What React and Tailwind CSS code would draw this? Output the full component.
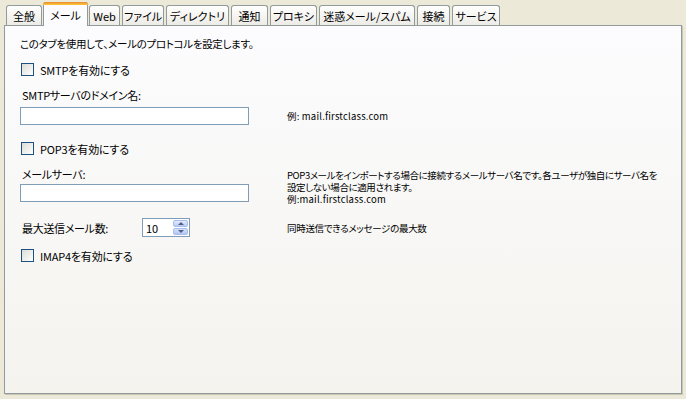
const tabs = [
  { label: "全般", w: "w-[36px]" },
  { label: "メール", w: "w-[45px]", active: true },
  { label: "Web", w: "w-[31px]" },
  { label: "ファイル", w: "w-[42px]" },
  { label: "ディレクトリ", w: "w-[63px]" },
  { label: "通知", w: "w-[37px]" },
  { label: "プロキシ", w: "w-[47px]" },
  { label: "迷惑メール/スパム", w: "w-[96px]" },
  { label: "接続", w: "w-[33px]" },
  { label: "サービス", w: "w-[48px]" },
];

const font =
  "font-['Noto_Sans_CJK_JP','Noto_Sans',sans-serif] [font-feature-settings:'palt'] text-[11px] leading-[12px] text-black";

function Checkbox({ label }) {
  return (
    <div className="flex items-center h-[13px] pl-[1px]">
      <span className="w-[13px] h-[13px] border border-[#1C5180] bg-gradient-to-br from-[#DCDCD7] to-white" />
      <span className="ml-[6px] tracking-[-0.2px]">{label}</span>
    </div>
  );
}

function TextInput() {
  return <div className="w-[229px] h-[18px] border border-[#7F9DB9] bg-white" />;
}

function Spinner() {
  return (
    <div className="w-[48px] h-[19px] border border-[#7F9DB9] bg-white flex items-center justify-between pl-[3px] pr-[1px]">
      <span>10</span>
      <div className="flex flex-col gap-[1px] w-[15px] h-[15px]">
        <div className="h-[7px] rounded-[2px] bg-gradient-to-b from-[#E3EBFD] to-[#B9CAF3] border border-[#A8BDEB] flex items-center justify-center overflow-hidden">
          <span className="w-0 h-0 border-x-[3px] border-x-transparent border-b-[3px] border-b-[#4D6185]" />
        </div>
        <div className="h-[7px] rounded-[2px] bg-gradient-to-b from-[#D5E0FA] to-[#B4C6F1] border border-[#A8BDEB] flex items-center justify-center overflow-hidden">
          <span className="w-0 h-0 border-x-[3px] border-x-transparent border-t-[3px] border-t-[#4D6185]" />
        </div>
      </div>
    </div>
  );
}

export default function App() {
  return (
    <div className={`w-[686px] h-[399px] bg-[#ECE9D8] px-[4px] ${font}`}>
      {/* tab strip */}
      <div className="flex items-end h-[25px] pl-[2px] gap-[2px]">
        {tabs.map((t) =>
          t.active ? (
            <div
              key={t.label}
              className={`${t.w} relative z-10 h-[24px] -mb-[1px] -mx-[1px] border border-b-0 border-[#919B9C] rounded-t-[3px] bg-[#FCFCFE] flex flex-col`}
            >
              <div className="h-[3px] -mx-[1px] -mt-[1px] rounded-t-[3px] bg-gradient-to-b from-[#E68B2C] to-[#FFC73C]" />
              <div className="flex-1 flex items-center justify-center pb-[1px] whitespace-nowrap">
                {t.label}
              </div>
            </div>
          ) : (
            <div
              key={t.label}
              className={`${t.w} h-[20px] border border-b-0 border-[#919B9C] rounded-t-[3px] bg-gradient-to-b from-white to-[#ECEBE6] flex items-center justify-center whitespace-nowrap`}
            >
              {t.label}
            </div>
          )
        )}
      </div>

      {/* panel */}
      <div className="w-[678px] h-[369px] border border-[#919B9C] shadow-[1px_1px_0_#C9C6B5] bg-gradient-to-b from-[#FCFCFE] to-[#F4F3EE] pl-[15px] pt-[12px]">
        <p className="h-[12px] tracking-[-0.3px] text-[10.5px]">
          このタブを使用して、メールのプロトコルを設定します。
        </p>

        <div className="mt-[13px]">
          <Checkbox label="SMTPを有効にする" />
        </div>

        <p className="mt-[13px] pl-[2px] h-[12px] tracking-[-0.3px]">SMTPサーバのドメイン名:</p>

        <div className="mt-[6px] grid grid-cols-[267px_1fr] items-center">
          <TextInput />
          <span className="text-[9.5px] tracking-[0.2px]">例: mail.firstclass.com</span>
        </div>

        <div className="mt-[17px]">
          <Checkbox label="POP3を有効にする" />
        </div>

        <div className="mt-[13px] grid grid-cols-[267px_1fr]">
          <div>
            <p className="pl-[2px] h-[12px] tracking-[-0.3px]">メールサーバ:</p>
            <div className="mt-[4px]">
              <TextInput />
            </div>
          </div>
          <div className="text-[9.5px] leading-[12px] tracking-[-0.4px] whitespace-nowrap pt-[1px]">
            <p>POP3メールをインポートする場合に接続するメールサーバ名です。各ユーザが独自にサーバ名を</p>
            <p>設定しない場合に適用されます。</p>
            <p className="tracking-[0.2px]">例:mail.firstclass.com</p>
          </div>
        </div>

        <div className="mt-[13px] grid grid-cols-[267px_1fr] items-center">
          <div className="flex items-center">
            <span className="pl-[2px] w-[122px] tracking-[-0.3px]">最大送信メール数:</span>
            <Spinner />
          </div>
          <span className="text-[9.5px] tracking-[-0.3px]">同時送信できるメッセージの最大数</span>
        </div>

        <div className="mt-[12px]">
          <Checkbox label="IMAP4を有効にする" />
        </div>
      </div>
    </div>
  );
}
